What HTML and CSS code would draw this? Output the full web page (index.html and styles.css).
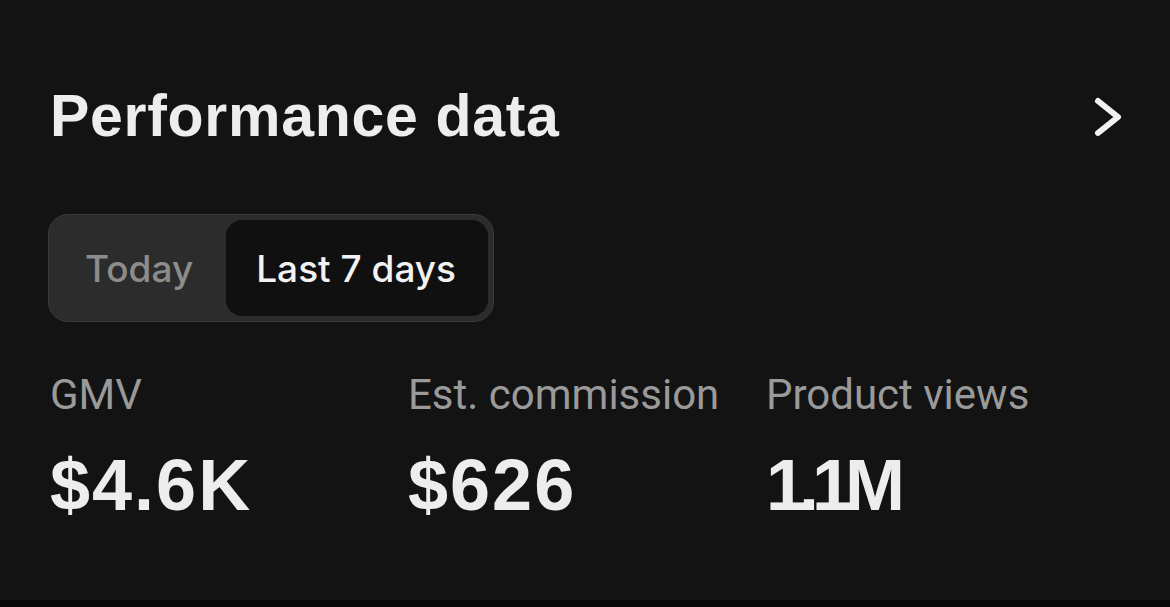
FILE: index.html
```html
<!DOCTYPE html>
<html lang="en">
<head>
    <meta charset="UTF-8">
    <meta name="viewport" content="width=device-width, initial-scale=1.0">
    <title>Performance data</title>
    <link rel="stylesheet" href="styles.css">
</head>
<body>
    <div class="card">
        <div class="card-header">
            <h2 class="card-title">Performance data</h2>
            <svg class="chevron" width="32" height="44" viewBox="0 0 32 44">
                <path d="M6 6 L26 22 L6 38" fill="none" stroke="#f2f2f2" stroke-width="6" stroke-linecap="round" stroke-linejoin="round"/>
            </svg>
        </div>

        <div class="segment">
            <button class="segment-item">Today</button>
            <button class="segment-item active">Last 7 days</button>
        </div>

        <div class="stats">
            <div class="stat">
                <span class="stat-label">GMV</span>
                <span class="stat-value">$4.6K</span>
            </div>
            <div class="stat">
                <span class="stat-label">Est. commission</span>
                <span class="stat-value">$626</span>
            </div>
            <div class="stat">
                <span class="stat-label">Product views</span>
                <span class="stat-value tight">1.1M</span>
            </div>
        </div>
    </div>
</body>
</html>
```

FILE: styles.css
```css
body {
    margin: 0;
    background-color: #0a0a0a;
    font-family: "Liberation Sans", Arial, sans-serif;
    color: #f2f2f2;
}
.card {
    background-color: #131313;
    height: 600px;
    padding: 87px 46px 0 48px;
    box-sizing: border-box;
    display: flex;
    flex-direction: column;
}
.card-header {
    display: flex;
    justify-content: space-between;
    align-items: center;
    height: 59px;
}
.card-title {
    margin: 0 0 0 2px;
    font-size: 59px;
    line-height: 59px;
    font-weight: 700;
    letter-spacing: 0.7px;
    color: #ededed;
}
.segment {
    margin-top: 68px;
    align-self: flex-start;
    display: flex;
    padding: 5px;
    background-color: #2c2c2c;
    border: 1px solid #3a3a3a;
    border-radius: 20px;
}
.segment-item {
    font-family: Inter, "Open Sans", sans-serif;
    font-size: 37px;
    font-weight: 500;
    background: none;
    border: none;
    color: #8c8c8c;
    height: 96px;
    padding: 0 33px 0 31px;
    border-radius: 16px;
}
.segment-item.active {
    background-color: #101010;
    color: #f2f2f2;
    padding: 0 32px 0 30px;
}
.stats {
    display: flex;
    margin-top: 48px;
    padding-left: 2px;
}
.stat {
    width: 358px;
    display: flex;
    flex-direction: column;
}
.stat-label {
    font-family: Roboto, sans-serif;
    font-size: 42px;
    line-height: 50px;
    color: #9a9a9a;
}
.stat-value {
    margin-top: 29px;
    font-size: 72px;
    line-height: 72px;
    font-weight: 700;
    letter-spacing: 2px;
    color: #ededed;
}
.stat-value.tight {
    letter-spacing: -7px;
}
```
